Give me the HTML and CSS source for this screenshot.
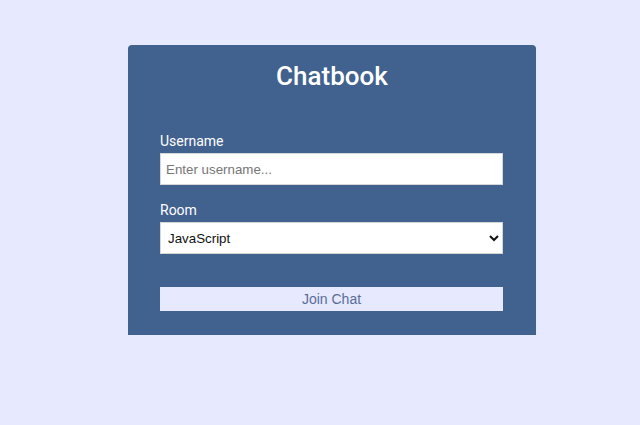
FILE: index.html
```html
<!DOCTYPE html>
<html lang="en">
<head>
<meta charset="utf-8">
<title>Chatbook</title>
<link rel="stylesheet" href="styles.css">
</head>
<body>
<div class="join-container">
  <header class="join-header">
    <h1>Chatbook</h1>
  </header>
  <main class="join-main">
    <form class="join-form">
      <div class="form-control">
        <label for="username">Username</label>
        <input type="text" id="username" placeholder="Enter username...">
      </div>
      <div class="form-control">
        <label for="room">Room</label>
        <select id="room">
          <option>JavaScript</option>
          <option>Python</option>
          <option>PHP</option>
        </select>
      </div>
      <button type="button" class="btn">Join Chat</button>
    </form>
  </main>
</div>
</body>
</html>
```
FILE: styles.css
```css
html, body {
  margin: 0;
  padding: 0;
}
body {
  background: #e6e9ff;
  font-family: Roboto, "Liberation Sans", sans-serif;
  width: 640px;
  height: 425px;
}
.join-container {
  width: 408px;
  margin: 45px 0 0 128px;
  background: #41618f;
  color: #fff;
  border-radius: 4px 4px 0 0;
}
.join-header {
  padding-top: 16px;
  text-align: center;
}
.join-header h1 {
  margin: 0;
  font-size: 26px;
  line-height: 30px;
  font-weight: 500;
}
.join-main {
  padding: 40px 33px 24px 32px;
}
.form-control {
  margin-bottom: 15px;
}
.form-control label {
  display: block;
  font-size: 14px;
  line-height: 20px;
  margin-bottom: 2px;
}
.form-control input,
.form-control select {
  display: block;
  box-sizing: border-box;
  width: 100%;
  height: 32px;
  margin: 0;
  font-family: "Liberation Sans", Arial, sans-serif;
  font-size: 13.33px;
  border: 1px solid #d6d6d6;
  background: #fff;
  color: #111;
  border-radius: 0;
}
.form-control input {
  padding: 0 5px;
}
.form-control input::placeholder {
  color: #767676;
}
.form-control select {
  padding: 0 3px;
}
.btn {
  display: block;
  box-sizing: border-box;
  width: 100%;
  height: 24px;
  margin-top: 33px;
  border: 0;
  background: #e6e9ff;
  color: #5a6d9a;
  font-family: "Liberation Sans", Arial, sans-serif;
  font-size: 14px;
  padding: 0;
}
.join-form {
  margin: 0;
}
.join-form .form-control:nth-child(2) {
  margin-bottom: 0;
}
```
